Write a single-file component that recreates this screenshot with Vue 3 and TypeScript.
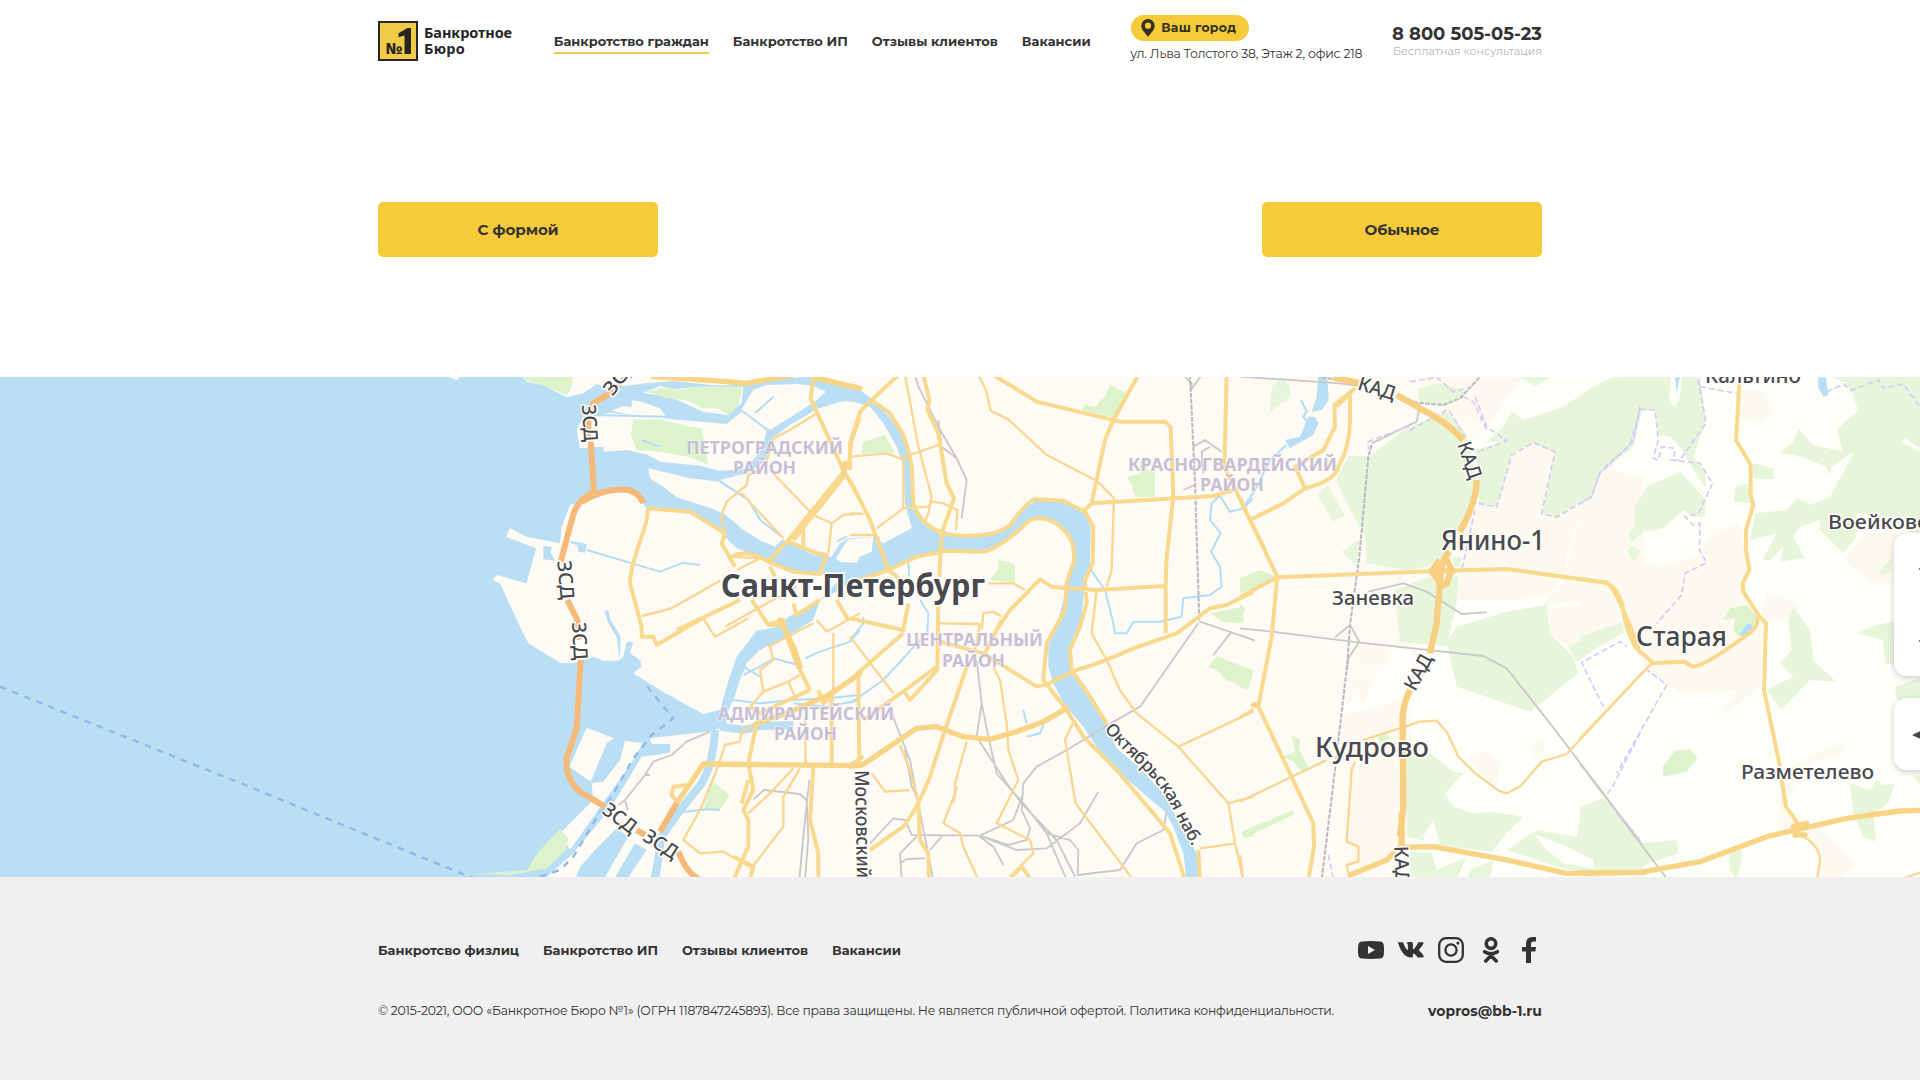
<script setup lang="ts">
import type { Directive } from 'vue'

interface NavItem {
  label: string
  width: number
  active?: boolean
}

interface Tile {
  x: number
  y: number
  layers: Record<string, string>
}

interface Label {
  text: string
  x: number
  y: number
  w: number
  kind: string
  rotate?: number
}

// Spreads the letters of a line over the given width in pixels.
const vFit: Directive<HTMLElement, number> = {
  mounted(el, binding) {
    const count = (el.textContent ?? '').trim().length
    el.style.letterSpacing = '0px'
    const natural = el.getBoundingClientRect().width
    el.style.letterSpacing = `${(binding.value - natural) / count}px`
  },
}

const headerNav: NavItem[] = [
  { label: 'Банкротство граждан', width: 155, active: true },
  { label: 'Банкротство ИП', width: 115 },
  { label: 'Отзывы клиентов', width: 126 },
  { label: 'Вакансии', width: 69 },
]

const footerNav: NavItem[] = [
  { label: 'Банкротсво физлиц', width: 141 },
  { label: 'Банкротство ИП', width: 115 },
  { label: 'Отзывы клиентов', width: 126 },
  { label: 'Вакансии', width: 69 },
]

// Painting order of the map, bottom to top.
const layerOrder = [
  'suburb', 'built', 'forest', 'clearing', 'sea', 'land', 'park', 'pond', 'stream', 'river',
  'rail', 'railDash', 'border', 'ferry', 'thin', 'road', 'wide', 'kad', 'zsd',
]

// Tile geometry is in thirds of a pixel, relative to the tile's corner.
const tiles: Tile[] = [
  {
    x: 460,
    y: 370,
    layers: {
      sea: `M-1380,15 L-33,15 -33,22 -10,30 8,15 185,15 200,35 250,45 320,82 370,70 410,42 440,54 560,40 640,33 760,46 860,45 940,27 1060,20 1200,62 1240,90 1200,98 1150,92 1070,118 990,165 935,205 935,245 900,285 860,310 780,330 870,390 905,450 970,510 1060,555 1115,560 1140,520 1165,505 1260,500 1260,560 1180,640 1080,690 1060,750 980,800 900,840 860,880 840,930 820,990 800,1030 800,1070 740,1085 570,1105 575,1122 630,1122 630,1148 545,1160 455,1310 340,1450 250,1530 -1380,1530Z`,
      land: `M350,180 L370,140 450,128 560,140 640,148 800,162 845,125 920,182 905,240 855,298 780,302 720,287 600,275 560,253 500,240 430,245 430,230 360,235Z
        M550,68 L600,48 650,58 700,50 850,50 845,100 800,135 730,125 640,85 570,72Z
        M845,118 L880,60 920,45 1010,42 1060,48 1098,65 1060,98 930,180Z
        M455,122 L490,108 515,112 515,90 545,95 600,115 622,145 530,138Z
        M565,295 L690,325 780,335 868,390 900,450 970,505 945,530 900,510 850,480 790,430 740,410 650,382 610,350 600,345 570,325Z
        M1128,565 L1165,508 1240,502 1235,545 1200,560 1190,578 1140,576Z
        M370,395 L480,360 530,375 560,415 690,432 780,487 830,535 930,575 990,602 1080,614 1160,605 1080,690 985,740 955,770 890,782 830,860 803,940 780,1020 730,1032 670,1000 600,960 520,910 545,890 540,870 510,850 520,815 500,815 490,860 475,872 430,872 400,860 340,880 300,878 205,820 180,770 120,640 97,630 110,615 200,640 228,535 138,500 150,475 200,500 300,520 305,470 330,405Z
        M380,1073 L462,1105 440,1120 392,1235 328,1190Z
        M495,1112 L548,1120 520,1170 400,1340 330,1440 300,1390 400,1290 395,1240 430,1235 480,1170Z
        M830,1072 L870,1070 900,1080 830,1085Z`,
      pond: `M250,528 L275,530 272,548 285,572 250,568Z M330,512 L380,522 375,548 355,545 352,525 330,520Z
        M433,722 L445,720 452,750 482,800 480,870 470,800 445,760Z
        M405,1440 L470,1375 505,1400 430,1530 345,1530 360,1490Z M525,1420 L560,1440 500,1530 460,1530Z M590,1440 L612,1450 590,1530 570,1530Z`,
      park: `M190,15 L340,15 335,50 320,75 250,45 200,32Z M520,150 L600,148 690,170 725,175 732,210 745,285 690,262 600,245 530,240 512,195Z
        M560,65 L620,50 650,62 700,50 848,52 835,105 810,135 770,115 730,115 680,90 620,85Z
        M760,1235 L808,1275 800,1290 782,1318 730,1322 745,1270Z
        M300,1378 L325,1405 318,1440 260,1495 150,1515 45,1512 200,1500 235,1445Z`,
      stream: `M380,540 L600,605 670,578 720,585 M400,135 L620,140 M885,130 L940,80 M780,335 L865,390 900,450 965,500 M1130,515 L1160,500
        M850,915 L900,890 940,865 1015,885 M1035,865 L1080,845 1170,815 1200,780 M820,990 L900,1000 1000,990 1100,985 1200,975 M850,890 L900,920 M1200,990 L1100,1010 1000,1000 M640,1330 L740,1318 780,1320
        M545,210 L600,230`,
      river: `M780,1070 L850,1080 900,1068 1000,1065 M765,1080 Q760,1180 725,1240 Q650,1330 605,1400 L585,1530`,
      rail: `M750,1085 L680,1115 635,1155 580,1175 555,1215 495,1290 475,1305 M495,1290 L503,1320 M555,1215 L570,1215 M880,1288 L912,1260 1020,1272 1040,1290 M1048,1230 L1030,1400 1018,1530 M1040,1290 L1045,1400 1035,1530`,
      ferry: `M-1380,950 L-645,1245 28,1520 60,1530 M240,1520 L300,1500 340,1460 415,1335 455,1280 520,1165 575,1095 640,1045 590,985 550,935`,
      thin: `M545,738 L635,715 780,632 M1070,130 L990,180 940,205 915,290 865,315 860,345 800,395 783,440 795,490 M845,370 L970,505 M930,300 L1060,435 1115,460 1105,550 M1115,460 L1150,435 1200,430 M815,560 L900,565 830,600 M730,745 L765,800 865,745 M795,770 L1010,650 M1070,750 L1100,785 1200,730 M1120,790 L1120,960 M930,830 L940,870 900,900 910,965 M870,1010 L910,965 985,935 1020,915 M985,935 L1010,990 M900,1060 L845,1085 840,1115 795,1125 770,1200 725,1310 670,1410 720,1450 790,1445 870,1490 M1020,1195 L970,1280 970,1370 870,1500 M1000,1195 L930,1270 865,1330 M1035,1040 L1037,1180 M925,830 L1060,760`,
      road: `M565,415 L690,425 795,490 785,520 825,590 M815,560 Q860,535 925,575 L1000,605 1080,612 1100,555 1070,550 985,515 M560,415 Q570,430 545,500 Q510,600 510,640 L545,770 545,800 580,800 590,825 735,740 M650,780 L840,690 M925,575 L985,510 1155,300 M1000,510 L1160,310 M1060,25 L1052,85 1145,290 1200,390 M1165,300 L1175,210 1200,140 M1030,530 L1030,470 1060,430 M930,590 L945,620 M875,690 L925,765 970,750 980,800 1010,880 1050,960 M925,765 L965,765 M1000,700 L1010,735 1080,690 M1130,690 L1165,750 M1050,960 L900,1030 870,1010 M1075,960 L1090,1000 1115,980 M1115,960 L1115,1180 M890,1060 L865,1180 880,1260 850,1320 865,1350 865,1430 820,1530 M865,1230 L845,1300 M680,1245 L640,1250 635,1275 650,1295 M1060,1190 L1050,1350 1075,1450 1075,1530 M820,1460 L880,1490 870,1530`,
      wide: `M580,20 L760,32 860,40 1000,15 M1060,22 L1200,55 M960,750 L1000,830 1020,890 M1200,910 L1115,970 980,1030 890,1060 M730,1182 L1200,1187 M730,1182 L650,1300 M1155,280 L1150,310`,
      zsd: `M505,15 L450,70 400,100 385,130 385,200 M392,215 L402,365 Q350,390 338,440 L302,575 M322,690 L352,750 355,810 M362,870 L350,1075 318,1170 Q320,1250 385,1280 L435,1310 M365,395 Q440,350 505,360 Q540,370 550,400 M530,1380 L555,1395 M650,1300 L600,1385 M655,1445 Q680,1510 720,1530`,
    },
  },
  {
    x: 850,
    y: 370,
    layers: {
      sea: `M-30,45 L25,55 65,90 120,140 160,200 175,245 185,330 190,400 215,450 265,480 340,497 420,492 480,465 530,410 560,390 640,395 705,430 722,470 720,590 705,630 695,750 665,830 665,910 700,960 770,1060 800,1135 870,1195 940,1270 1000,1380 1040,1450 1045,1530 L1010,1530 1000,1450 970,1370 945,1325 880,1270 800,1200 740,1130 700,1070 640,1000 610,940 595,890 595,830 625,750 650,650 670,560 660,510 630,465 580,442 550,447 500,495 430,535 350,545 290,540 180,570 120,600 0,640 L-60,650 -20,575 30,570 60,540 75,505 100,520 185,475 165,400 160,290 140,230 100,160 60,110 0,92 -30,95Z`,
      park: `M780,45 L828,68 800,145 695,120 705,105 740,110 750,90 765,80Z M35,250 L40,215 105,195 135,250 60,250Z
        M835,320 L870,310 870,275 890,260 890,300 915,305 915,380 855,382 845,345 830,320Z
        M418,630 L445,600 445,570 475,575 495,585 495,638Z M1170,640 L1210,615 1210,660Z M1080,730 L1180,710 1180,760 1120,755Z
        M1100,858 L1180,890 1210,900 1195,960 1130,930 1100,900 1075,890Z M1175,1400 L1210,1375 1210,1400Z`,
      stream: `M720,595 L765,660 790,760 795,790 830,790 850,755 930,755 995,740 1000,685 1080,675 1115,650 1110,590 1083,545 1112,490 1080,450 1085,400 1110,378 1140,425 1180,415 1210,385 M175,575 L178,620 M210,690 L235,730 232,790 M210,810 L100,930 0,1000 M40,740 L40,760 0,810 M520,1020 L530,1060 M580,1065 L570,1090 530,1100`,
      rail: `M195,15 L205,50 265,170 320,265 350,330 335,445 M265,150 L275,230 320,265 M380,870 L395,1000 380,1100 470,1240 515,1300 620,1410 680,1530 M395,1000 L415,1100 440,1210 520,1300 590,1390 650,1530 M125,1030 L180,1170 205,1300 250,1530 M165,1140 L185,1250 200,1280 M60,1420 L130,1345 165,1350 185,1395 390,1397 475,1425 530,1410 540,1375 515,1320 520,1240 560,1190 650,1140 765,1070 870,1010 1045,760 M390,1397 L490,1350 520,1270 M390,1397 L500,1440 590,1435 690,1360 745,1265 M390,1400 L430,1430 460,1485 M590,1390 L660,1410 685,1440 683,1515 810,1500 860,1420 940,1380 950,1325 M240,1440 L275,1400 M155,1530 L150,1450 200,1400 M150,1480 L170,1467 225,1465
        M1000,15 L1025,40 1023,60 1055,15 M1030,230 L1065,210 1115,245 M1080,230 L1055,245 1060,310 M1000,360 L1035,345 M1050,755 L1210,810 M1090,855 L1145,785`,
      railDash: `M1020,15 L1035,340 1048,755`,
      thin: `M385,15 L408,60 422,122 475,148 590,255 740,332 792,385 785,600 770,650 M165,15 L205,230 245,380 235,430 225,455 M0,260 L110,250 150,265 265,225 M160,265 L160,415 80,475 M160,415 L235,410 245,395 280,400 322,420 318,480 M0,430 L40,432 M0,495 L80,495 M415,640 L490,640 525,660 M395,780 L400,730 430,725 455,740 M270,760 L390,762 M740,660 L725,790 770,870 810,960 860,1030 985,1130 1135,1300 1155,1420 1180,1530 M985,1130 L1210,1025 M1135,1300 L1210,1280 M1050,1435 L1155,1420 M670,1055 L645,1110 660,1200 677,1300 850,1530 M430,890 L450,930 470,1060 475,1140 505,1230 440,1360 540,1410 550,1450 480,1520 M350,1115 L315,1240 315,1270 280,1360 330,1390 340,1430 385,1530 M65,1210 L105,1265 180,1260 M150,1125 L180,1200 205,1300 M0,800 L130,970 M390,760 L375,840 M320,1250 L310,1300`,
      road: `M430,15 L560,95 810,155 945,155 962,172 970,380 950,560 947,640 947,790 M865,15 L790,150 765,210 725,400 700,425 M725,400 L1090,378 1150,360 M1130,15 L1123,290 1200,450 1245,540 M145,15 L65,90 30,125 0,220 0,300 M0,330 L60,450 115,600 M220,15 L238,90 232,120 265,190 290,340 312,385 275,490 268,620 M265,700 L262,900 180,990 160,960 M65,90 L120,130 160,195 175,240 185,290 190,400 Q220,495 340,497 Q440,500 480,465 Q540,385 555,388 L640,392 705,425 730,470 728,580 705,630 710,700 690,770 660,840 665,900 720,980 770,1060 M0,640 L115,600 200,560 290,542 400,545 Q450,535 540,450 Q600,430 650,490 Q675,520 672,570 L650,640 645,720 590,820 580,930 650,1020 700,1100 800,1200 960,1390 1005,1530 M650,655 L740,660 945,648 M440,780 L480,720 570,628 605,650 650,655 M600,938 L680,900 Q750,880 850,835 L980,790 1080,715 1130,705 1210,665 M0,745 L160,780 175,700 M0,930 L160,790 M455,750 L400,860 M350,890 L340,920 285,1080 240,1220 Q200,1320 160,1370 L60,1440 M205,1300 L210,1410 235,1450 237,1530 M40,1160 L0,1185 M25,920 L28,1180 M40,1050 L180,950 260,890 M260,800 L270,815 400,850 560,950 600,940 M480,1525 L515,1490 540,1525 M1045,1440 L1050,1530 M115,600 L165,640`,
      wide: `M0,1188 L40,1183 200,1075 260,1070 340,1100 420,1108 500,1085 580,1055 650,1015`,
    },
  },
  {
    x: 1240,
    y: 370,
    layers: {
      suburb: `M2050,15 L860,15 700,220 700,500 650,620 640,740 560,860 490,1000 300,1030 440,880 450,830 520,830 500,1530 2050,1530Z`,
      built: `M715,400 L770,410 815,250 880,220 945,245 910,430 1010,450 980,560 980,600 900,720 1100,700 1140,640 1210,640 1210,320 1140,310 1100,260 1080,320 1050,390 950,440 1020,450 980,600 960,660 840,690 650,690 660,600Z M310,1040 L480,990 490,1150 490,1450 330,1520 330,1200 310,1150Z M350,835 L445,835 445,880 350,880Z M335,935 L400,930 370,1010Z M925,700 L1180,690 1100,790 990,830 925,790Z M680,1160 L740,1145 780,1180 770,1260Z M870,1130 L895,1110 920,1120 890,1170Z M540,15 L850,15 740,170 620,120Z`,
      forest: `M388,258 L500,175 620,125 680,190 710,330 700,400 640,520 600,570 560,590 500,600 380,580 378,500 330,420 288,330 325,258Z
        M715,330 L700,240 800,215 740,215 790,170 815,125 850,150 970,110 1060,50 1130,15 1210,15 1210,110 1180,230 1080,310 1050,380 950,440 908,430 945,245 880,220 815,250 770,410 715,400Z
        M95,50 L125,22 150,50 150,80 110,110 90,130Z M232,375 L262,345 315,435 280,455Z M305,545 L360,505 350,590Z
        M535,55 L600,40 680,65 620,105 535,95Z M840,22 L940,15 885,50Z M640,560 L665,560 660,590 640,590Z
        M465,660 L570,620 655,620 650,700 620,830 480,815Z
        M620,815 L650,770 800,725 920,705 928,790 1000,860 1015,910 870,1025 650,950Z M985,830 L1150,755 1150,780 1010,875Z
        M500,1160 L570,1150 640,1205 670,1210 615,1270 640,1310 700,1330 760,1325 850,1340 800,1390 755,1445 590,1425 545,1410 500,1400Z
        M550,1425 L600,1420 580,1350 550,1400 590,1430Z M800,1440 L890,1380 1010,1400 1025,1320 1090,1290 1210,1440 1210,1500 980,1500Z M510,1445 L575,1450 590,1500 680,1460 650,1530 510,1530Z M690,1500 L760,1470 750,1530 680,1530Z`,
      clearing: `M885,1392 L970,1425 1060,1470 1060,1495 970,1480 910,1430Z M545,1420 L585,1350 570,1425Z`,
      park: `M0,625 L60,600 110,620 0,670Z M0,890 L40,915 20,960 0,950Z M155,1095 L180,1110 178,1140 205,1190 185,1205 160,1175 130,1160 165,1145Z M5,1385 L160,1320 160,1335 10,1405Z M415,1100 L440,1090 450,1105 420,1120Z M0,700 L15,720 0,760Z`,
      pond: `M235,22 L262,22 266,90 245,120 215,125 230,80Z M135,210 L180,200 205,140 225,140 235,160 220,195 150,235Z`,
      stream: `M183,90 L200,125 190,140 215,170 M140,225 L90,270 45,360 15,405`,
      rail: `M0,20 L300,40 370,50 M540,105 L530,155 395,220 M330,765 L285,802 M330,765 L358,815 325,865 320,900 M0,775 L95,785 360,818 730,858 800,895 930,1060 1200,1415 M385,665 L490,640 560,665 665,732 740,727 M0,795 L45,812`,
      railDash: `M210,15 L350,40 M470,75 L530,98 610,105 660,85 725,15 M395,225 L385,260 358,560 330,765 322,880 285,1200 245,1530`,
      border: `M510,35 L590,22 640,65 700,50 M500,170 L385,215 385,240 M670,80 L700,95 740,180 M510,180 L625,118 675,200 M705,80 L740,170 800,212 715,245 M715,400 L770,412 815,255 880,218 945,245 905,430 950,442 1055,380 1080,310 1180,215 1200,110 M705,420 L665,600 M1090,1010 L1025,878 1140,815 1160,830 M1200,1090 L1120,1245 1100,1275 M265,1455 L280,1525 M1120,1310 L1200,1410`,
      thin: `M0,1040 L40,1018 M0,1295 L260,1170 M370,1110 L540,1055 590,1052 620,1085 655,1160 700,1205 775,1262 800,1270 840,1250 905,1175 980,1152 1210,905 M345,1175 L335,1200 320,1415 355,1430 355,1475 320,1485 325,1510 M0,1455 L10,1530`,
      road: `M0,385 L30,450 112,620 95,800 55,1010 M30,450 L130,400 195,355 165,290 250,240 285,170 283,105 345,55 M195,355 Q290,330 295,290 Q330,230 330,150 L330,75 M0,680 L112,622 590,603 800,597 1100,638 Q1140,660 1150,720 L1175,780 1200,850 M55,1010 L150,1210 220,1360 222,1430 205,1530 M290,110 L345,55 M590,603 L580,605`,
      wide: `M40,1005 L50,1005 M575,603 L640,603 M480,1432 L580,1430 800,1470 980,1510 1210,1508 M485,1425 L440,1470 330,1515`,
      kad: `M280,22 L370,42 M470,75 L540,115 Q620,155 670,210 M710,330 Q712,390 660,485 M630,545 Q600,570 600,640 L590,760 570,850 M510,960 Q485,1010 488,1060 L490,1310 480,1400 M485,1330 L485,1430 M615,560 L635,600 620,640 600,650 M600,570 L575,603 600,640 M600,580 L600,660`,
    },
  },
  {
    x: 1580,
    y: 370,
    layers: {
      built: `M470,60 L550,60 585,130 540,155 470,140Z M0,390 L60,310 120,320 100,380 40,450 0,450Z M80,570 L130,555 230,590 350,560 400,490 480,460 500,600 480,660 540,740 560,670 660,700 640,740 560,760 540,950 440,1030 430,1010 480,960 300,970 200,900 130,740 0,740 0,660 60,650Z M790,570 L860,490 1020,490 940,640 880,640Z M610,1200 L790,1115 790,1150 700,1180 640,1250 620,1310 720,1380 830,1480 780,1525 740,1525 700,1420 590,1370 600,1310Z`,
      forest: `M0,100 L150,15 270,15 280,100 300,60 305,15 360,15 378,150 340,260 378,310 375,375 300,305 270,200 235,195 225,120 180,120 165,190 60,300 0,390Z
        M200,350 L300,305 378,390 375,440 340,440 310,420 250,475 190,485 155,515 143,490 165,470 165,410Z M155,525 L182,545 160,575 140,545Z M700,15 L1020,15 1020,500 900,440 830,430 830,500 790,550 720,480 720,450 660,470 640,500 675,565 600,575 610,530 570,570 548,570 590,490 510,510 525,430 620,420 650,385 690,405 750,380 820,250 750,320 740,290 650,255 600,250 640,215 655,175 700,225 790,245 770,180 830,125 820,70Z
        M520,280 L578,295 582,328 520,325Z M465,350 L510,340 515,400 462,395Z M640,710 L690,780 700,870 768,935 690,930 605,1018 560,960 640,920 600,880 635,840 625,750Z
        M830,790 L890,765 940,755 945,885 915,880 910,810Z M945,950 L1020,925 1020,990 950,990Z M0,800 L130,755 130,790 0,860Z
        M0,1310 L70,1285 130,1350 190,1420 290,1410 295,1450 180,1490 0,1500Z M445,1450 L485,1440 485,1470 470,1530 450,1500Z
        M810,1240 L870,1260 890,1230 910,1245 945,1240 925,1300 880,1330 888,1415 850,1400 820,1330Z M0,1520 L60,1515 50,1530 0,1530Z M900,600 L940,560 930,600 905,620Z M1000,1220 L1020,1215 1020,1245Z`,
      clearing: `M740,15 L800,40 835,120 780,150 700,210 655,175 620,100 660,15Z M962,215 L975,205 1020,235 1020,245Z M272,22 L305,22 300,80 285,110 268,95Z M220,200 L270,200 300,230 375,355 378,375 290,295 225,260Z M0,1470 L40,1465 40,1490 0,1490Z M755,290 L820,245 790,310 745,330Z`,
      park: `M430,750 L450,715 500,705 535,745 510,770 480,800 460,785 465,745Z M248,1190 L285,1142 330,1138 352,1165 320,1205 250,1220Z`,
      pond: `M480,790 L500,762 520,760 515,780 485,800Z M715,22 L738,22 745,75 730,80 715,55Z M285,22 L300,22 290,70Z`,
      rail: `M0,1180 L260,1525`,
      border: `M0,400 L35,380 60,305 150,225 180,118 225,120 235,210 220,265 235,270 245,230 285,235 280,270 M355,30 L378,160 300,270 270,270 360,280 398,340 355,430 315,440 340,465 360,460 358,540 380,578 315,610 305,675 230,760 M360,50 L470,70 M740,65 L790,42 815,60 895,30 910,55 970,42 1020,110 M195,895 L260,945 110,1210`,
      thin: `M0,1105 L215,880 M665,1395 Q720,1430 720,1470 L712,1525 M970,1525 L1020,1508`,
      road: `M478,40 L468,210 512,285 512,375 520,405 498,480 498,540 508,600 488,640 490,665 535,735 558,760 552,960 600,1190 M605,1230 L618,1310 660,1370 M0,627 L80,638 Q100,650 130,720 Q135,770 165,830 L220,880 310,875 340,890 Q380,885 500,795 Q530,780 535,740`,
      wide: `M0,1508 L180,1507 360,1475 560,1400 800,1345 960,1323 1020,1321 M640,1370 L680,1360 M645,1395 L675,1395`,
    },
  },
]

// Label coordinates are page pixels; turned labels are centred on their point.
const labels: Label[] = [
  { text: 'ПЕТРОГРАДСКИЙ', x: 686, y: 453.5, w: 157, kind: 'district' },
  { text: 'РАЙОН', x: 733, y: 474, w: 63, kind: 'district' },
  { text: 'КРАСНОГВАРДЕЙСКИЙ', x: 1128, y: 470.5, w: 209, kind: 'district' },
  { text: 'РАЙОН', x: 1200, y: 491, w: 64, kind: 'district' },
  { text: 'ЦЕНТРАЛЬНЫЙ', x: 906, y: 646, w: 137, kind: 'district' },
  { text: 'РАЙОН', x: 942, y: 666.5, w: 63, kind: 'district' },
  { text: 'АДМИРАЛТЕЙСКИЙ', x: 718, y: 719.5, w: 176, kind: 'district' },
  { text: 'РАЙОН', x: 774, y: 740, w: 63, kind: 'district' },
  { text: 'Санкт-Петербург', x: 721, y: 596.5, w: 264, kind: 'city' },
  { text: 'Янино-1', x: 1441, y: 549.5, w: 104, kind: 'town' },
  { text: 'Кудрово', x: 1315, y: 756.5, w: 114, kind: 'town' },
  { text: 'Старая', x: 1636, y: 646, w: 91, kind: 'town' },
  { text: 'Заневка', x: 1332, y: 605, w: 82, kind: 'village' },
  { text: 'Разметелево', x: 1741, y: 779, w: 133, kind: 'village' },
  { text: 'Воейково', x: 1828, y: 529, w: 102, kind: 'village' },
  { text: 'Кальтино', x: 1705, y: 383, w: 96, kind: 'village' },
  { text: 'ЗСД', x: 620, y: 376, w: 42, kind: 'highway', rotate: -52 },
  { text: 'ЗСД', x: 590, y: 423, w: 37, kind: 'highway', rotate: 86 },
  { text: 'ЗСД', x: 566, y: 580, w: 39, kind: 'highway', rotate: 85 },
  { text: 'ЗСД', x: 580, y: 641, w: 38, kind: 'highway', rotate: 87 },
  { text: 'ЗСД', x: 620, y: 818, w: 37, kind: 'highway', rotate: 37 },
  { text: 'ЗСД', x: 661, y: 844, w: 37, kind: 'highway', rotate: 33 },
  { text: 'КАД', x: 1377, y: 388, w: 38, kind: 'highway', rotate: 17 },
  { text: 'КАД', x: 1470, y: 460, w: 38, kind: 'highway', rotate: 71 },
  { text: 'КАД', x: 1418, y: 672, w: 38, kind: 'highway', rotate: -62 },
  { text: 'КАД', x: 1402, y: 865, w: 38, kind: 'highway', rotate: 88 },
  { text: 'Московский', x: 863, y: 824, w: 108, kind: 'highway', rotate: 89 },
]
</script>

<template>
  <div class="page">
    <header class="wrap header">
      <a class="logo">
        <svg class="logo-mark" viewBox="0 0 40 40">
          <rect x="1" y="1" width="38" height="38" fill="#f1ca47" stroke="#28261f" stroke-width="2" />
          <text x="7.500" y="33" font-size="15.500" textLength="17" lengthAdjust="spacingAndGlyphs">№</text>
          <path d="M33 7V33H26.500V14.500L20.500 16.300V12.300L29.500 7Z" fill="#28261f" />
        </svg>
        <span class="logo-name"><span v-fit="88">Банкротное</span><span v-fit="41">Бюро</span></span>
      </a>
      <nav class="nav header-nav">
        <a v-for="item in headerNav" :key="item.label" :class="{ active: item.active }">
          <span v-fit="item.width">{{ item.label }}</span>
        </a>
      </nav>
      <div class="place">
        <button class="city-button">
          <svg width="14" height="18" viewBox="0 0 14 18">
            <path fill="#33301f" fill-rule="evenodd" d="M7 0a6.7 6.7 0 0 1 6.7 6.7C13.700 11 9.500 14 7 18 4.500 14 .3 11 .3 6.700A6.700 6.700 0 0 1 7 0ZM7 3.600a3.100 3.100 0 1 0 0 6.200 3.100 3.100 0 0 0 0-6.200Z" />
          </svg>
          <span v-fit="75">Ваш город</span>
        </button>
        <div class="address"><span v-fit="232">ул. Льва Толстого 38, Этаж 2, офис 218</span></div>
      </div>
      <div class="contact">
        <a class="phone"><span v-fit="150">8 800 505-05-23</span></a>
        <div class="hint"><span v-fit="149">Бесплатная консультация</span></div>
      </div>
    </header>

    <main class="wrap actions">
      <button class="action"><span v-fit="81">С формой</span></button>
      <button class="action"><span v-fit="75">Обычное</span></button>
    </main>

    <section class="map">
      <svg class="map-canvas" viewBox="0 377 1920 500">
        <g v-for="layer in layerOrder" :key="layer" :class="['layer', layer]">
          <template v-for="tile in tiles" :key="tile.x">
            <path
              v-if="tile.layers[layer]"
              :d="tile.layers[layer]"
              :transform="`translate(${tile.x} ${tile.y}) scale(.33333)`"
            />
          </template>
        </g>
        <text
          v-for="(label, i) in labels"
          :key="i"
          :class="['label', label.kind]"
          :textLength="label.w"
          lengthAdjust="spacingAndGlyphs"
          :transform="label.rotate === undefined
            ? `translate(${label.x} ${label.y})`
            : `translate(${label.x} ${label.y}) rotate(${label.rotate}) translate(0 7)`"
        >{{ label.text }}</text>
        <path id="embankment" d="M1104 729.500C1126 754 1149 773 1161 789C1173 806 1179 825 1197 854" fill="none" />
        <text class="label street"><textPath href="#embankment" textLength="148">Октябрьская наб.</textPath></text>
      </svg>
      <div class="map-controls">
        <div class="zoom-box"><i /><i /></div>
        <div class="locate-box">
          <svg width="22" height="22" viewBox="0 0 22 22"><path d="M0 11 22 1 15 11 22 21Z" fill="#444" /></svg>
        </div>
      </div>
    </section>

    <footer class="footer">
      <div class="wrap footer-top">
        <nav class="nav">
          <a v-for="item in footerNav" :key="item.label"><span v-fit="item.width">{{ item.label }}</span></a>
        </nav>
        <div class="social">
          <svg viewBox="0 0 26 26">
            <path fill-rule="evenodd" d="M4 4.400Q13 3.600 22 4.400 25.600 4.700 25.800 8.500 26.200 13 25.800 17.500 25.500 21.300 22 21.600 13 22.400 4 21.600.500 21.300.200 17.500-.200 13 .200 8.500.500 4.700 4 4.400ZM10 9V17L17 13Z" />
          </svg>
          <svg viewBox="0 0 26 26">
            <path d="M.500 5.200H4.400Q5 5.200 5.300 6.100 6.900 10.800 9 12.700 9.900 13.300 9.900 11.900V8.200Q9.800 6.500 8.600 6 9.200 5.100 10.800 5.100H13.700Q14.900 5.200 14.900 6.500V11.200Q15 12.700 16 11.900 18.200 9.800 19.900 6 20.200 5.200 21 5.200H24.600Q26 5.200 25.400 6.700 24.300 9 21.500 12 20.600 13 21.600 14 24.500 16.700 25.500 18.600 26.100 20.500 24.300 20.600H20.900Q20 20.600 19.200 19.700 17 16.900 15.800 16.500 15 16.500 14.900 18V19.200Q14.900 20.500 13.500 20.600 8.500 20.700 5.200 16.500 2 12.400.100 6.300-.200 5.300.500 5.200Z" />
          </svg>
          <svg viewBox="0 0 26 26">
            <g fill="none" stroke="#333" stroke-width="2.300">
              <rect x="1.200" y="1.200" width="23.600" height="23.600" rx="6.800" />
              <circle cx="13" cy="13" r="5.600" />
            </g>
            <circle cx="19.900" cy="6.100" r="1.600" />
          </svg>
          <svg viewBox="0 0 26 26">
            <g fill="none" stroke="#333" stroke-width="3.500" stroke-linecap="round" stroke-linejoin="round">
              <circle cx="13" cy="6.600" r="4.800" />
              <path d="M6.600 14.700Q13 18.800 19.400 14.700M7.800 24 13 18.500 18.200 24" />
            </g>
          </svg>
          <svg viewBox="0 0 26 26">
            <path d="M10 26V14.500H6V10H10V7Q10 0 16.500 0H20V4.400H17.500Q15 4.400 15 7V10H20L19.400 14.500H15V26Z" />
          </svg>
        </div>
      </div>
      <div class="wrap footer-bottom">
        <div class="copyright"><span v-fit="956">© 2015-2021, ООО «Банкротное Бюро №1» (ОГРН 1187847245893). Все права защищены. Не является публичной офертой. Политика конфиденциальности.</span></div>
        <a class="email"><span v-fit="114">vopros@bb-1.ru</span></a>
      </div>
    </footer>
  </div>
</template>

<style>
body {
  margin: 0;
  overflow: hidden;
}
</style>

<style scoped>
.page {
  width: 1920px;
  height: 1080px;
  overflow: hidden;
  background: #fff;
  color: #333;
  font-family: Montserrat, Inter, "Liberation Sans", sans-serif;
  white-space: nowrap;
}
.page span {
  display: inline-block;
}
.wrap {
  width: 1164px;
  margin: 0 auto;
  display: flex;
}
.header {
  height: 82px;
}
.logo {
  display: flex;
  width: 176px;
  padding-top: 21px;
  box-sizing: border-box;
}
.logo-mark {
  width: 40px;
  height: 40px;
}
.logo-mark text {
  font-family: "Noto Sans", sans-serif;
  font-weight: 800;
  fill: #28261f;
}
.logo-name {
  display: flex !important;
  flex-direction: column;
  align-items: flex-start;
  margin: 3px 0 0 6px;
  font: 700 14.500px/16px "Noto Sans", sans-serif;
  color: #242424;
}
.nav {
  display: flex;
  gap: 24px;
  font-size: 13px;
  font-weight: 700;
  line-height: 18px;
}
.header-nav {
  padding-top: 32px;
  width: 577px;
}
.header-nav a {
  height: 20px;
  border-bottom: 2px solid transparent;
}
.header-nav a.active {
  border-color: #f0ca4a;
}
.place {
  width: 261px;
  padding: 15px 0 0 1px;
}
.city-button {
  display: flex;
  align-items: center;
  gap: 6px;
  width: 118px;
  height: 26px;
  padding: 0 0 0 10px;
  border: 0;
  border-radius: 13px;
  background: #f6cb39;
  color: #33301f;
  font: 700 12.500px/24px Montserrat, Inter, sans-serif;
}
.address {
  margin: 5px 0 0 -1px;
  font-size: 12.400px;
  line-height: 16px;
  font-weight: 400;
}
.contact {
  padding-top: 23px;
}
.phone {
  display: block;
  font-size: 18px;
  font-weight: 700;
  line-height: 22px;
}
.hint {
  margin-left: 1px;
  font-size: 11px;
  line-height: 12px;
  font-weight: 400;
  color: #b5b5b5;
}
.actions {
  height: 295px;
  padding-top: 120px;
  box-sizing: border-box;
  justify-content: space-between;
}
.action {
  width: 280px;
  height: 55px;
  border: 0;
  border-radius: 5px;
  background: #f6cb39;
  color: #333;
  font: 700 15.200px/20px Montserrat, Inter, sans-serif;
}
.map {
  position: relative;
  height: 500px;
  overflow: hidden;
  background: #fefbf5;
}
.map-canvas {
  display: block;
  width: 1920px;
  height: 500px;
}
.layer { stroke-linejoin: round; fill: none; }
.suburb { fill: #fffffa; }
.built { fill: #fdf9ef; }
.forest { fill: #e7f6da; }
.clearing { fill: #fffffa; }
.sea, .pond { fill: #badff5; }
.land { fill: #fefbf5; }
.park { fill: #dcf3cc; }
.stream { stroke: #b4ddf4; stroke-width: 6; }
.river { stroke: #badff5; stroke-width: 24; }
.rail { stroke: #c9c9c9; stroke-width: 5.500; }
.railDash { stroke: #b9b9bd; stroke-width: 6; stroke-dasharray: 14 4; }
.border { stroke: #d3cbf8; stroke-width: 5; stroke-dasharray: 18 9; }
.ferry { stroke: #8cb9e6; stroke-width: 7; stroke-dasharray: 20 19; }
.thin { stroke: #f9d693; stroke-width: 7; }
.road { stroke: #f8d98e; stroke-width: 12; }
.wide { stroke: #f8d486; stroke-width: 16; stroke-linecap: round; }
.kad { stroke: #f8ce80; stroke-width: 19; }
.zsd { stroke: #f5b97a; stroke-width: 18; }
.label {
  font-family: "Noto Sans", sans-serif;
  fill: #484a4f;
  stroke: #fffefa;
  stroke-width: 3px;
  stroke-linejoin: round;
  paint-order: stroke;
}
.district { font-size: 17.500px; font-weight: 700; fill: #c6bfd6; stroke-width: 1.500px; stroke-opacity: .6; }
.city { font-size: 31.500px; font-weight: 700; }
.town { font-size: 26.500px; font-weight: 500; }
.village { font-size: 20px; font-weight: 500; }
.highway { font-size: 19.500px; font-weight: 500; text-anchor: middle; }
.street { font-size: 17.500px; font-weight: 500; }
.map-controls {
  position: absolute;
  top: 156px;
  right: -46px;
  display: flex;
  flex-direction: column;
  gap: 22px;
}
.zoom-box,
.locate-box {
  width: 72px;
  height: 72px;
  border-radius: 13px;
  background: #fff;
  box-shadow: 0 2px 6px rgba(0, 0, 0, .2);
  box-sizing: border-box;
  padding: 26px 0 0 18px;
}
.zoom-box {
  height: 143px;
  padding: 35px 0 0 25px;
}
.zoom-box i {
  display: block;
  width: 22px;
  height: 2px;
  margin-bottom: 70px;
  background: #777;
}
.footer {
  height: 203px;
  background: #f0f0f0;
}
.footer-top {
  justify-content: space-between;
  padding-top: 60px;
  height: 26px;
}
.footer-top .nav {
  padding-top: 4px;
}
.social {
  display: flex;
  gap: 14px;
}
.social svg {
  width: 26px;
  height: 26px;
  fill: #333;
}
.social svg:last-child {
  margin: 0 0 0 -2px;
}
.footer-bottom {
  justify-content: space-between;
  padding-top: 37px;
  line-height: 22px;
}
.copyright {
  font-size: 12.400px;
  font-weight: 400;
}
.email {
  font-size: 14px;
  font-weight: 700;
}
</style>
